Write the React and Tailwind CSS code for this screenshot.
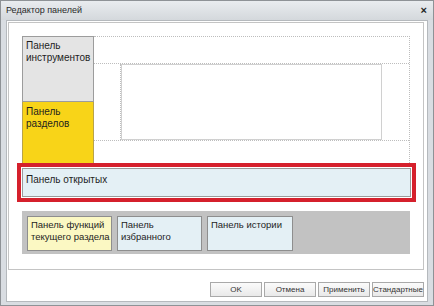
export default function App() {
  const font = { fontFamily: '"Liberation Sans", Arial, sans-serif' };
  return (
    <div style={font} className="w-[434px] h-[306px] bg-[#d9dde2] border border-[#8e9296] flex flex-col text-[#1e1e1e] overflow-hidden">
      <div className="h-[19px] flex items-center justify-between pl-[5px] pr-[6px] bg-gradient-to-b from-[#e9ecef] to-[#d4d8dc]">
        <span className="text-[9px] text-[#2a2a2a]">Редактор панелей</span>
        <span className="text-[11px] font-bold leading-none text-[#222]">×</span>
      </div>
      <div className="flex-1 ml-[5px] mr-[5px] mb-[3px] bg-white border border-[#b5b9bd] flex flex-col">
        <div className="mt-[1px] ml-[1px] mr-[3px] h-[248px] border border-[#c4c4c4] flex flex-col">
          <div className="ml-[13px] mr-[13px] mt-[13px] h-[127px] flex">
            <div className="w-[72px] flex flex-col">
              <div className="h-[66px] bg-[#e4e4e4] border border-[#9c9c9c] px-[3px] pt-[3px] text-[10px] leading-[12px]">
                Панель<br />инструментов
              </div>
              <div className="flex-1 bg-[#f8d418] border-x border-[#b8a34a] px-[3px] pt-[4px] text-[10px] leading-[12px]">
                Панель<br />разделов
              </div>
            </div>
            <div className="flex-1 flex flex-col border-t border-r border-dotted border-[#bdbdbd]">
              <div className="h-[26px]"></div>
              <div className="h-[78px] flex border-y border-dotted border-[#bdbdbd]">
                <div className="w-[27px] border-r border-dotted border-[#bdbdbd]"></div>
                <div className="flex-1 border border-[#d0d0d0]"></div>
                <div className="w-[27px]"></div>
              </div>
              <div className="flex-1"></div>
            </div>
          </div>
          <div className="ml-[8px] mr-[7px] h-[39px] border-[4px] border-[#d5202c] p-[1px] bg-white">
            <div className="h-full bg-[#e4f0f5] border border-[#9a9a9a] px-[3px] pt-[5px] text-[10px] leading-[12px]">
              Панель открытых
            </div>
          </div>
          <div className="ml-[13px] mr-[13px] mt-[9px] h-[43px] bg-[#c2c2c2] flex gap-[5px] pl-[5px] pt-[5px]">
            <div className="w-[85px] h-[35px] bg-[#fbf8c3] border border-[#8e8e8e] pl-[3px] pt-[2px] text-[9.5px] leading-[12px] whitespace-nowrap overflow-hidden">
              Панель функций<br />текущего раздела
            </div>
            <div className="w-[85px] h-[35px] bg-[#e4f0f5] border border-[#8e8e8e] pl-[3px] pt-[2px] text-[9.5px] leading-[12px] whitespace-nowrap">
              Панель<br />избранного
            </div>
            <div className="w-[86px] h-[35px] bg-[#e4f0f5] border border-[#8e8e8e] pl-[3px] pt-[2px] text-[9.5px] leading-[12px] whitespace-nowrap">
              Панель истории
            </div>
          </div>
        </div>
        <div className="flex justify-end gap-[2px] mr-[3px] mt-[12px]">
          {["OK", "Отмена", "Применить", "Стандартные"].map((t) => (
            <div key={t} className="w-[52px] h-[15px] border border-[#a9a9a9] bg-gradient-to-b from-[#fbfbfb] to-[#e9e9e9] flex items-center justify-center text-[8px] text-[#333] whitespace-nowrap overflow-hidden">
              {t}
            </div>
          ))}
        </div>
      </div>
    </div>
  );
}
